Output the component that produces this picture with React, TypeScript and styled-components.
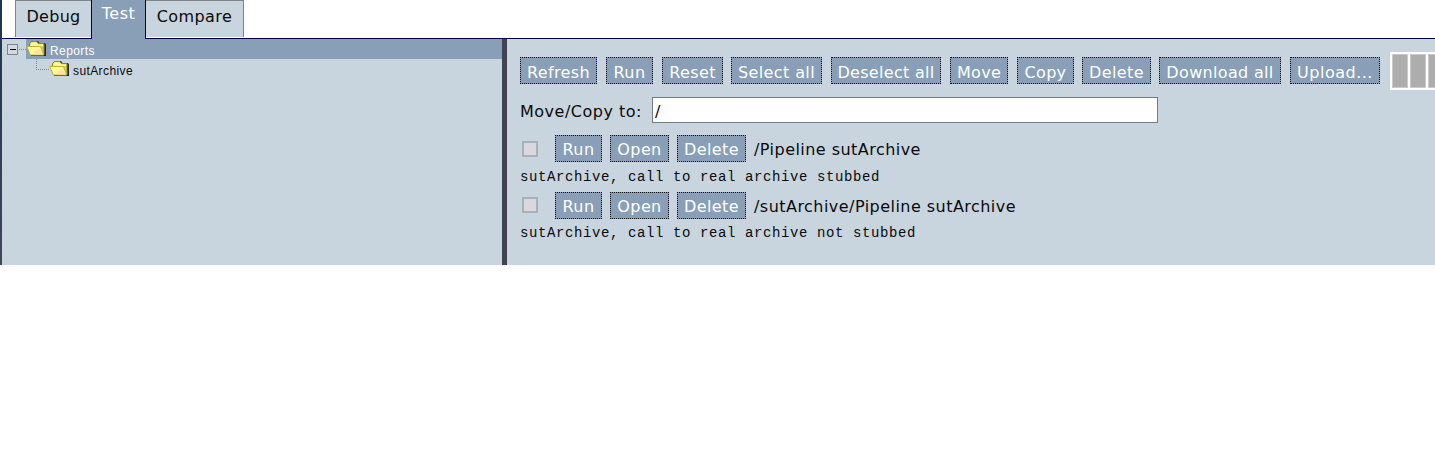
import React from "react";
import styled, { createGlobalStyle } from "styled-components";

const Global = createGlobalStyle`
  * { box-sizing: border-box; }
  body { margin: 0; background: #fff; overflow: hidden; }
`;

const sans = `Verdana, "DejaVu Sans", sans-serif`;

const Page = styled.div`
  width: 1435px;
  height: 265px;
  overflow: hidden;
  display: flex;
  font: 16px/20px ${sans};
  color: #0a0a0a;
`;
const Edge = styled.div`
  flex: none;
  width: 2px;
  background: linear-gradient(#1d3450, #42465a);
`;
const Main = styled.div`
  flex: 1;
  min-width: 0;
  display: flex;
  flex-direction: column;
`;
const Tabs = styled.div`
  display: flex;
  align-items: flex-start;
  height: 39px;
  padding-left: 13px;
  border-bottom: 1px solid #00003c;
`;
const Tab = styled.div<{ $w: number; $ls: number; $edges: string }>`
  flex: none;
  width: ${(p) => p.$w}px;
  height: 37px;
  padding-top: 6px;
  text-align: center;
  white-space: nowrap;
  letter-spacing: ${(p) => p.$ls}px;
  background: #c9d5de;
  border: solid #808488;
  border-width: ${(p) => p.$edges};
`;
const ActiveTab = styled(Tab)`
  height: 39px;
  padding-top: 4px;
  color: #fff;
  background: #889fb7;
  border-color: #00003c;
`;
const Panels = styled.div`
  flex: 1;
  display: flex;
  background: #c9d5de;
`;
const Tree = styled.div`
  flex: none;
  width: 500px;
  font: 12px/20px Arial, "Liberation Sans", sans-serif;
`;
const Node = styled.div<{ $level: number }>`
  display: flex;
  height: 20px;
  padding-left: ${(p) => (p.$level ? 33 : 4)}px;
`;
const NodeLabel = styled.div<{ $selected?: boolean }>`
  flex: 1;
  display: flex;
  padding-top: 2px;
  gap: 3px;
  letter-spacing: ${(p) => (p.$selected ? 0.4 : 0.4)}px;
  color: ${(p) => (p.$selected ? "#fff" : "#0a0a0a")};
  background: ${(p) => (p.$selected ? "#889fb7" : "transparent")};
  svg { margin-top: -2px; }
`;
const Splitter = styled.div`
  flex: none;
  width: 5px;
  background: #414252;
`;
const Content = styled.div`
  flex: 1;
  min-width: 0;
  padding: 13px 0 0 13px;
`;
const Toolbar = styled.div`
  display: flex;
  align-items: center;
  height: 38px;
`;
const ToolbarActions = styled.div`
  display: flex;
  flex: none;
  height: 28px;
`;
const Button = styled.button<{ $w: number; $gap: number; $ls?: number; $pad?: number }>`
  flex: none;
  width: ${(p) => p.$w}px;
  height: 27px;
  margin: 0 ${(p) => p.$gap}px 0 0;
  padding: ${(p) => p.$pad ?? 5}px 0 ${(p) => 5 - (p.$pad ?? 5)}px;
  border: 1px dotted #000;
  background: #889fb7;
  color: #fff;
  font: 16px/20px ${sans};
  letter-spacing: ${(p) => p.$ls ?? 0.4}px;
  white-space: nowrap;
`;
const Progress = styled.div`
  flex: none;
  display: flex;
  gap: 2px;
  width: 120px;
  height: 38px;
  padding: 2px;
  background: #fff;
`;
const Block = styled.div`
  flex: none;
  width: 16px;
  height: 34px;
  background: #adadad;
  border: 1px solid #c9c9c9;
`;
const MoveRow = styled.div`
  display: flex;
  align-items: center;
  height: 26px;
  margin-top: 7px;
`;
const MoveLabel = styled.label`
  width: 132px;
  padding-top: 4px;
  letter-spacing: 0.5px;
  white-space: nowrap;
`;
const PathInput = styled.input`
  width: 506px;
  height: 26px;
  padding: 2px 1px 0 2px;
  border: 1px solid #767b80;
  background: #fff;
  color: #0a0a0a;
  font: 16px/20px ${sans};
  outline: none;
`;
const Report = styled.div<{ $top: number }>`
  margin-top: ${(p) => p.$top}px;
`;
const ReportRow = styled.div`
  display: flex;
  height: 27px;
`;
const Check = styled.div<{ $top: number }>`
  flex: none;
  width: 16px;
  height: 16px;
  margin: ${(p) => p.$top}px 17px 0 2px;
  border: 2px solid #abb0b8;
  background: #d9d8de;
`;
const ReportName = styled.div<{ $top: number }>`
  padding-top: ${(p) => p.$top}px;
  letter-spacing: 0.46px;
  white-space: nowrap;
`;
const Description = styled.div<{ $top: number }>`
  height: 17px;
  margin-top: ${(p) => p.$top}px;
  font: 14px/17px "Courier New", "Liberation Mono", monospace;
  letter-spacing: 0.6px;
  white-space: pre;
`;

const Folder = () => (
  <svg width="21" height="20" viewBox="0 0 21 20">
    <path d="M4 5L6 2h6l1.500 2H19l1 1.500V17H5z" fill="#23271c" />
    <path d="M3.500 7V4.500L5.500 2.500h5.500l1.500 2H18v11" fill="#d9d14e" stroke="#8b8832" />
    <path d="M4.500 5l1.500-1.700h4.500l1.500 2h5V7H4.500z" fill="#fdf5a0" />
    <path d="M.8 7.500H14.500l3.300 8.500H4.300z" fill="#fff894" stroke="#bdb33a" />
    <path d="M8 12.500l6-2.500 2.500 5.500H9z" fill="#ffe3a4" />
  </svg>
);
const Expander = () => (
  <svg width="20" height="20" viewBox="0 0 20 20" shapeRendering="crispEdges">
    <rect x="1.500" y="5.500" width="10" height="10" fill="#d2d9df" stroke="#7d848b" />
    <path d="M4 10.500h6" stroke="#000" />
    <path d="M13 10.500h7" stroke="#7f868d" strokeDasharray="1 1" />
  </svg>
);
const Branch = () => (
  <svg width="14" height="20" viewBox="0 0 14 20" shapeRendering="crispEdges">
    <path d="M1.500 0v10.500H14" fill="none" stroke="#7f868d" strokeDasharray="1 1" />
  </svg>
);

const actions: [string, number, number, number][] = [
  ["Refresh", 77, 9, 0.4],
  ["Run", 47, 9, 0.5],
  ["Reset", 61, 8, 0.4],
  ["Select all", 91, 9, 0.4],
  ["Deselect all", 110, 9, 0.3],
  ["Move", 58, 9, 0.3],
  ["Copy", 57, 8, 0.3],
  ["Delete", 69, 8, 0.4],
  ["Download all", 122, 9, 0.33],
  ["Upload...", 90, 10, 0.5],
];

const reports = [
  { name: "/Pipeline sutArchive", text: "sutArchive, call to real archive stubbed", top: 12, check: 6, pad: 4, label: 5, desc: 7 },
  { name: "/sutArchive/Pipeline sutArchive", text: "sutArchive, call to real archive not stubbed", top: 6, check: 5, pad: 4, label: 5, desc: 6 },
];

export default function App() {
  return (
    <>
      <Global />
      <Page>
        <Edge />
        <Main>
          <Tabs>
            <Tab $w={76} $ls={0.3} $edges="1px 0 0 1px">Debug</Tab>
            <ActiveTab $w={55} $ls={0.5} $edges="0 1px">Test</ActiveTab>
            <Tab $w={98} $ls={0.4} $edges="1px 1px 0 0">Compare</Tab>
          </Tabs>
          <Panels>
            <Tree>
              <Node $level={0}>
                <Expander />
                <NodeLabel $selected><Folder />Reports</NodeLabel>
              </Node>
              <Node $level={1}>
                <Branch />
                <NodeLabel><Folder />sutArchive</NodeLabel>
              </Node>
            </Tree>
            <Splitter />
            <Content>
              <Toolbar>
                <ToolbarActions>
                  {actions.map(([label, w, gap, ls]) => (
                    <Button key={label} $w={w} $gap={gap} $ls={ls}>{label}</Button>
                  ))}
                </ToolbarActions>
                <Progress>
                  {[0, 1, 2, 3, 4, 5].map((i) => <Block key={i} />)}
                </Progress>
              </Toolbar>
              <MoveRow>
                <MoveLabel>Move/Copy to:</MoveLabel>
                <PathInput defaultValue="/" />
              </MoveRow>
              {reports.map((r) => (
                <Report key={r.name} $top={r.top}>
                  <ReportRow>
                    <Check $top={r.check} />
                    <Button $w={47} $gap={8} $pad={r.pad}>Run</Button>
                    <Button $w={59} $gap={8} $pad={r.pad}>Open</Button>
                    <Button $w={69} $gap={8} $pad={r.pad}>Delete</Button>
                    <ReportName $top={r.label}>{r.name}</ReportName>
                  </ReportRow>
                  <Description $top={r.desc}>{r.text}</Description>
                </Report>
              ))}
            </Content>
          </Panels>
        </Main>
      </Page>
    </>
  );
}
